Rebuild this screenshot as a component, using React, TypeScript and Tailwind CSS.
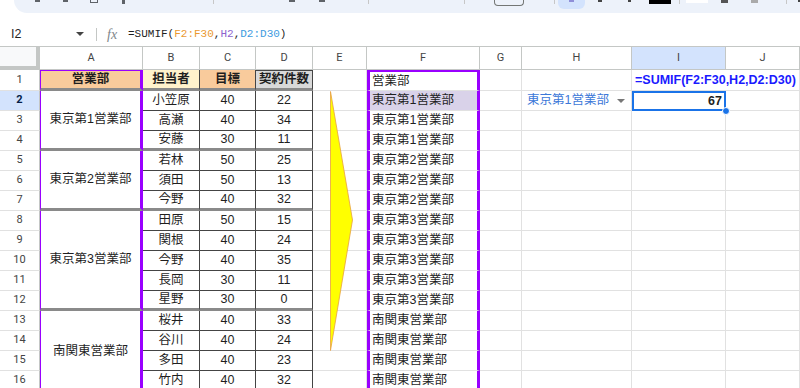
import React from 'react';

type Person = { name: string; target: number; count: number };

const people: Record<number, Person> = {
  2: { name: '小笠原', target: 40, count: 22 },
  3: { name: '高瀬', target: 40, count: 34 },
  4: { name: '安藤', target: 30, count: 11 },
  5: { name: '若林', target: 50, count: 25 },
  6: { name: '須田', target: 50, count: 13 },
  7: { name: '今野', target: 40, count: 32 },
  8: { name: '田原', target: 50, count: 15 },
  9: { name: '関根', target: 40, count: 24 },
  10: { name: '今野', target: 40, count: 35 },
  11: { name: '長岡', target: 30, count: 11 },
  12: { name: '星野', target: 30, count: 0 },
  13: { name: '桜井', target: 40, count: 33 },
  14: { name: '谷川', target: 40, count: 24 },
  15: { name: '多田', target: 40, count: 23 },
  16: { name: '竹内', target: 40, count: 32 },
};

const groups = [
  { start: 2, end: 4, label: '東京第1営業部', span: 'row-span-3' },
  { start: 5, end: 7, label: '東京第2営業部', span: 'row-span-3' },
  { start: 8, end: 12, label: '東京第3営業部', span: 'row-span-5' },
  { start: 13, end: 16, label: '南関東営業部', span: 'row-span-4' },
];

const groupEnds = [4, 7, 12];
const letters = ['A', 'B', 'C', 'D', 'E', 'F', 'G', 'H', 'I', 'J'];

const grid = 'border-r border-b border-[#e1e1e1]';

function deptOf(r: number) {
  const g = groups.find((g) => r >= g.start && r <= g.end);
  return g ? g.label : '';
}

function Toolbar() {
  const sep = 'shrink-0 w-px h-[4px] bg-[#c7c7c7]';
  return (
    <div className="ml-[14px] h-[13px] bg-[#edf2fa] rounded-bl-[14px] flex items-start">
      <div className="shrink-0 ml-[21px] w-[5px] h-[2px] bg-[#5f6368]" />
      <div className="shrink-0 ml-[23px] w-[5px] h-[2px] bg-[#5f6368]" />
      <div className="shrink-0 ml-[22px] w-[8px] h-[3px] border-x border-b border-[#5f6368]" />
      <div className="shrink-0 ml-[24px] w-[3px] h-[4px] bg-[#5f6368]" />
      <div className={`${sep} ml-[88px]`} />
      <div className="shrink-0 ml-[75px] w-[6px] h-[2px] bg-[#5f6368]" />
      <div className="shrink-0 ml-[24px] w-[6px] h-[2px] bg-[#5f6368]" />
      <div className={`${sep} ml-[43px]`} />
      <div className={`${sep} ml-[95px]`} />
      <div className="shrink-0 ml-[29px] w-[30px] h-[6px] border-x border-b border-[#747775] rounded-b-[4px]" />
      <div className={`${sep} ml-[30px]`} />
      <div className="shrink-0 ml-[3px] w-[27px] h-[9px] bg-[#d3e3fd] rounded-b-[6px] flex justify-center">
        <div className="w-[5px] h-[2px] bg-[#8f8fd8]" />
      </div>
      <div className="shrink-0 ml-[13px] w-[4px] h-[2px] bg-[#444]" />
      <div className="shrink-0 ml-[26px] w-[3px] h-[2px] bg-[#444]" />
      <div className="shrink-0 ml-[18px] w-[22px] h-[4px] bg-black" />
      <div className={`${sep} ml-[8px]`} />
      <div className="shrink-0 ml-[6px] w-[22px] h-[3px] bg-white" />
      <div className="shrink-0 ml-[13px] w-[7px] h-[3px] bg-[#555]" />
      <div className="shrink-0 ml-[23px] w-[7px] h-[3px] bg-[#aaa]" />
      <div className={`${sep} ml-[28px]`} />
      <div className="shrink-0 ml-[11px] w-[3px] h-[2px] bg-[#444]" />
    </div>
  );
}

function FormulaBar() {
  return (
    <div className="mt-[9px] h-[25px] border-b border-[#c4c7c5] flex items-start">
      <div className="w-[96px] h-[24px] flex items-center justify-between pl-[11px] pr-[12px]">
        <span className="text-[12.5px] text-[#1f1f1f]">I2</span>
        <span className="w-0 h-0 border-l-[4px] border-r-[4px] border-t-[4px] border-l-transparent border-r-transparent border-t-[#444]" />
      </div>
      <div className="h-[24px] flex items-center">
        <div className="w-px h-[13px] bg-[#c4c7c5]" />
        <span className="ml-[10px] w-[18px] font-['Liberation_Serif',serif] italic text-[14px] text-[#80868b]">fx</span>
        <span className="ml-[3px] font-['Liberation_Mono',monospace] text-[11px] text-[#1f1f1f]">
          =SUMIF(<span className="text-[#eb9a30]">F2:F30</span>,<span className="text-[#8e63ce]">H2</span>,
          <span className="text-[#3d9be0]">D2:D30</span>)
        </span>
      </div>
    </div>
  );
}

function Sheet() {
  const cells: React.ReactNode[] = [];

  cells.push(<div key="corner" className="bg-[#f8f9fa] border-r-4 border-b-4 border-[#c4c7c5]" />);
  letters.forEach((l) => {
    const sel = l === 'I';
    cells.push(
      <div
        key={`h${l}`}
        className={`flex items-center justify-center border-r border-b border-[#c4c7c5] text-[11px] text-[#444] font-['Roboto',sans-serif] ${sel ? 'bg-[#d3e3fd] text-[#0b57d0]' : 'bg-white'}`}
      >
        {l}
      </div>
    );
  });

  for (let r = 1; r <= 16; r++) {
    const rowSel = r === 2;
    cells.push(
      <div
        key={`r${r}`}
        className={`flex items-center justify-center border-r border-r-[#c4c7c5] border-b border-b-[#e1e1e1] text-[11px] font-['Roboto',sans-serif] ${rowSel ? 'bg-[#d3e3fd] font-bold text-[#041e49]' : 'text-[#444]'}`}
      >
        {r}
      </div>
    );

    // column A
    if (r === 1) {
      cells.push(
        <div key="A1" className="flex items-center justify-center bg-[#f9cb9c] border-l border-t border-[#9900ff] border-r-[3px] border-b-[3px] border-b-[#8a8a8a] font-bold">
          営業部
        </div>
      );
    } else {
      const g = groups.find((g) => g.start === r);
      if (g) {
        const last = groupEnds.includes(g.end);
        cells.push(
          <div
            key={`A${r}`}
            className={`${g.span} flex items-center justify-center border-l border-[#9900ff] border-r-[3px] ${last ? 'border-b-[3px] border-b-[#8a8a8a]' : ''}`}
          >
            {g.label}
          </div>
        );
      }
    }

    // B, C, D
    if (r === 1) {
      cells.push(
        <div key="B1" className="flex items-center justify-center bg-[#fff2cc] border-r border-r-[#444] border-b-[3px] border-b-[#8a8a8a] font-bold">担当者</div>,
        <div key="C1" className="flex items-center justify-center bg-[#f9cb9c] border-r border-r-[#444] border-b-[3px] border-b-[#8a8a8a] font-bold">目標</div>,
        <div key="D1" className="flex items-center justify-center bg-[#d9d9d9] border-t border-r border-[#444] border-b-[3px] border-b-[#8a8a8a] font-bold">契約件数</div>
      );
    } else {
      const p = people[r];
      const bottom = groupEnds.includes(r) ? 'border-b-[3px] border-b-[#8a8a8a]' : 'border-b border-b-[#444]';
      cells.push(
        <div key={`B${r}`} className={`flex items-center justify-center border-r border-r-[#444] ${bottom}`}>{p.name}</div>,
        <div key={`C${r}`} className={`flex items-center justify-center border-r border-r-[#444] ${bottom}`}>{p.target}</div>,
        <div key={`D${r}`} className={`flex items-center justify-center border-r border-r-[#444] ${bottom}`}>{p.count}</div>
      );
    }

    // E
    cells.push(<div key={`E${r}`} className={grid} />);

    // F
    cells.push(
      <div
        key={`F${r}`}
        className={`flex items-center pl-[2px] border-x-[3px] border-[#9900ff] border-b border-b-[#e1e1e1] whitespace-nowrap ${r === 1 ? 'border-t-2' : ''} ${r === 2 ? 'bg-[#d9d2e9]' : ''}`}
      >
        {r === 1 ? '営業部' : deptOf(r)}
      </div>
    );

    // G
    cells.push(<div key={`G${r}`} className={grid} />);

    // H
    if (r === 2) {
      cells.push(
        <div key="H2" className={`${grid} flex items-center justify-between pl-[5px] pr-[6px]`}>
          <span className="text-[#3c78d8]">東京第1営業部</span>
          <span className="w-0 h-0 border-l-[4px] border-r-[4px] border-t-[4px] border-l-transparent border-r-transparent border-t-[#777]" />
        </div>
      );
    } else {
      cells.push(<div key={`H${r}`} className={grid} />);
    }

    // I
    if (r === 1) {
      cells.push(
        <div key="I1" className="border-b border-[#e1e1e1] flex items-center pl-[3px] whitespace-nowrap font-bold text-[#1a1aff] overflow-visible">
          =SUMIF(F2:F30,H2,D2:D30)
        </div>
      );
    } else if (r === 2) {
      cells.push(
        <div key="I2" className="relative z-10 border-2 border-[#1a73e8] flex items-center justify-end pr-[2px] font-bold">
          67
          <span className="absolute -right-[6px] -bottom-[6px] w-[8px] h-[8px] rounded-full bg-[#1a73e8] border border-white" />
        </div>
      );
    } else {
      cells.push(<div key={`I${r}`} className={grid} />);
    }

    // J
    cells.push(<div key={`J${r}`} className={grid} />);
  }

  return (
    <div className="relative">
      <div className="grid grid-cols-[40px_103px_57px_56px_57px_54px_113px_42px_110px_94px_74px] grid-rows-[23px_21px_repeat(15,20px)] text-[12.5px] text-[#1f1f1f]">
        {cells}
      </div>
      <svg className="absolute left-[329px] top-[44px]" width="25" height="261" viewBox="0 0 25 261">
        <polygon points="1.5,0.5 23.5,129 1.5,259.5" fill="#ffff00" stroke="#e8a040" strokeWidth="0.8" />
      </svg>
    </div>
  );
}

export default function App() {
  return (
    <div className="w-[800px] h-[388px] overflow-hidden bg-white font-['Liberation_Sans','Noto_Sans_CJK_JP',sans-serif]">
      <Toolbar />
      <FormulaBar />
      <Sheet />
    </div>
  );
}
